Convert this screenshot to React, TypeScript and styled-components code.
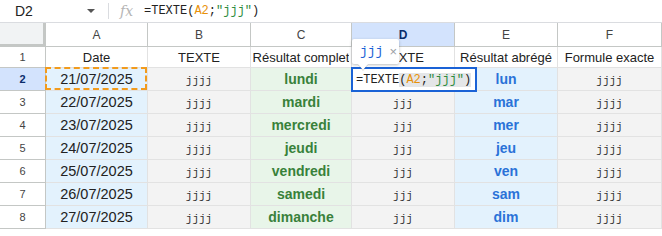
import styled, { createGlobalStyle } from 'styled-components';

const GlobalStyle = createGlobalStyle`
  body {
    margin: 0;
    background: #ffffff;
    font-family: 'Liberation Sans', Arial, sans-serif;
    color: #222;
  }
`;

const Page = styled.div`
  width: 662px;
  height: 236px;
  overflow: hidden;
  background: #fff;
`;

const FormulaBar = styled.div`
  display: flex;
  align-items: center;
  height: 23px;
  border-bottom: 1px solid #dadce0;
  box-sizing: border-box;
`;

const NameBox = styled.div`
  width: 82px;
  padding-left: 15px;
  font-size: 14px;
  color: #222;
  box-sizing: border-box;
`;

const Caret = styled.span`
  width: 0;
  height: 0;
  border-left: 4px solid transparent;
  border-right: 4px solid transparent;
  border-top: 4px solid #555;
  margin-left: 5px;
`;

const Divider = styled.span`
  width: 1px;
  height: 16px;
  background: #dadce0;
  margin: 0 11px 0 13px;
`;

const Fx = styled.span`
  font-family: 'DejaVu Serif', serif;
  font-style: italic;
  font-size: 14px;
  color: #b5b5b5;
  width: 24px;
`;

const FormulaText = styled.span`
  font-family: 'Liberation Mono', 'DejaVu Sans Mono', monospace;
  font-size: 12px;
  color: #222;
  white-space: pre;
`;

const Ref = styled.span`
  color: #e8910a;
`;

const Str = styled.span`
  color: #2e8b3e;
`;

const Paren = styled.span<{ $hl?: boolean }>`
  background: ${(p) => (p.$hl ? '#e4e6e8' : 'transparent')};
`;

const Grid = styled.div`
  display: grid;
  grid-template-columns: 46px 102px 103px 101px 103px 103px 104px;
  grid-template-rows: 24px 21px repeat(7, 23px);
`;

const Corner = styled.div`
  background: #f1f3f4;
  border-right: 3px solid #c4c7c5;
  border-bottom: 3px solid #c4c7c5;
  box-sizing: border-box;
`;

const ColHead = styled.div<{ $active?: boolean }>`
  display: flex;
  align-items: center;
  justify-content: center;
  font-size: 12px;
  color: ${(p) => (p.$active ? '#0b2d6b' : '#444')};
  font-weight: ${(p) => (p.$active ? 'bold' : 'normal')};
  background: ${(p) => (p.$active ? '#d3e3fd' : '#fff')};
  border-right: 1px solid #c4c7c5;
  border-bottom: 1px solid #c4c7c5;
  box-sizing: border-box;
`;

const RowHead = styled.div<{ $active?: boolean }>`
  display: flex;
  align-items: center;
  justify-content: center;
  font-size: 11px;
  color: ${(p) => (p.$active ? '#0b2d6b' : '#444')};
  font-weight: ${(p) => (p.$active ? 'bold' : 'normal')};
  background: ${(p) => (p.$active ? '#d3e3fd' : '#fff')};
  border-right: 1px solid #c4c7c5;
  border-bottom: 1px solid #c4c7c5;
  box-sizing: border-box;
`;

type Kind = 'head' | 'date' | 'mono' | 'green' | 'blue';

const bg: Record<Kind, string> = {
  head: '#ffffff',
  date: '#e3f2fd',
  mono: '#f3f3f3',
  green: '#e8f5e9',
  blue: '#e3f2fd',
};

const Cell = styled.div<{ $kind: Kind }>`
  position: relative;
  display: flex;
  align-items: ${(p) => (p.$kind === 'mono' ? 'flex-end' : 'center')};
  justify-content: center;
  padding-bottom: ${(p) => (p.$kind === 'mono' ? '3px' : '0')};
  background: ${(p) => bg[p.$kind]};
  border-right: 1px solid #e2e2e2;
  border-bottom: 1px solid #e2e2e2;
  box-sizing: border-box;
  white-space: nowrap;
  font-size: ${(p) =>
    p.$kind === 'head' ? '13px' : p.$kind === 'date' ? '14.5px' : p.$kind === 'mono' ? '11px' : '14px'};
  font-family: ${(p) =>
    p.$kind === 'mono' ? "'Liberation Mono', 'DejaVu Sans Mono', monospace" : "'Liberation Sans', Arial, sans-serif"};
  font-weight: ${(p) => (p.$kind === 'green' || p.$kind === 'blue' ? 'bold' : 'normal')};
  color: ${(p) =>
    p.$kind === 'green' ? '#38813a' : p.$kind === 'blue' ? '#2a72d8' : p.$kind === 'mono' ? '#333' : '#222'};
`;

const CellText = styled.span`
  overflow: hidden;
`;

const RefOutline = styled.div`
  position: absolute;
  inset: -1px 0 0 -1px;
  border: 2px dashed #f29b1d;
  pointer-events: none;
`;

const Editor = styled.div`
  position: absolute;
  left: -1px;
  top: -1px;
  width: 126px;
  height: 25px;
  display: flex;
  align-items: center;
  padding-left: 3px;
  background: #fff;
  border: 2px solid #1a62d6;
  box-sizing: border-box;
  z-index: 3;
  font-family: 'Liberation Mono', 'DejaVu Sans Mono', monospace;
  font-size: 12px;
  font-weight: normal;
  color: #222;
  white-space: pre;
`;

const Tip = styled.div`
  position: absolute;
  left: 0;
  top: -29px;
  width: 47px;
  height: 25px;
  display: flex;
  align-items: center;
  gap: 6px;
  padding-left: 8px;
  background: #fff;
  box-sizing: border-box;
  box-shadow: 0 1px 3px rgba(60, 64, 67, 0.35);
  border-radius: 2px;
  z-index: 4;

  &::after {
    content: '';
    position: absolute;
    left: 6px;
    bottom: -6px;
    border-left: 5px solid transparent;
    border-right: 5px solid transparent;
    border-top: 6px solid #fff;
    filter: drop-shadow(0 1px 0 rgba(60, 64, 67, 0.2));
  }
`;

const TipText = styled.span`
  font-family: 'Liberation Mono', 'DejaVu Sans Mono', monospace;
  font-size: 13px;
  color: #1a62d6;
`;

const TipClose = styled.span`
  font-family: 'Liberation Sans', Arial, sans-serif;
  font-size: 13px;
  color: #9aa0a6;
`;

const cols = ['A', 'B', 'C', 'D', 'E', 'F'];
const full = ['lundi', 'mardi', 'mercredi', 'jeudi', 'vendredi', 'samedi', 'dimanche'];
const short = ['lun', 'mar', 'mer', 'jeu', 'ven', 'sam', 'dim'];

function Formula() {
  return (
    <>
      =TEXTE<Paren $hl>(</Paren>
      <Paren $hl>
        <Ref>A2</Ref>;<Str>"jjj"</Str>
      </Paren>
      <Paren $hl>)</Paren>
    </>
  );
}

export default function App() {
  return (
    <Page>
      <GlobalStyle />
      <FormulaBar>
        <NameBox>D2</NameBox>
        <Caret />
        <Divider />
        <Fx>fx</Fx>
        <FormulaText>
          =TEXTE(<Ref>A2</Ref>;<Str>"jjj"</Str>)
        </FormulaText>
      </FormulaBar>
      <Grid>
        <Corner />
        {cols.map((c) => (
          <ColHead key={c} $active={c === 'D'}>
            {c}
          </ColHead>
        ))}

        <RowHead>1</RowHead>
        <Cell $kind="head">Date</Cell>
        <Cell $kind="head">TEXTE</Cell>
        <Cell $kind="head">
          <CellText>Résultat complet</CellText>
        </Cell>
        <Cell $kind="head">TEXTE</Cell>
        <Cell $kind="head">Résultat abrégé</Cell>
        <Cell $kind="head">Formule exacte</Cell>

        {full.map((day, i) => {
          const row = i + 2;
          return (
            <>
              <RowHead key={`h${row}`} $active={row === 2}>
                {row}
              </RowHead>
              <Cell key={`a${row}`} $kind="date">
                {`${21 + i}/07/2025`}
                {row === 2 && <RefOutline />}
              </Cell>
              <Cell key={`b${row}`} $kind="mono">
                jjjj
              </Cell>
              <Cell key={`c${row}`} $kind="green">
                {day}
              </Cell>
              <Cell key={`d${row}`} $kind="mono">
                {row === 2 ? (
                  <>
                    <Tip>
                      <TipText>jjj</TipText>
                      <TipClose>×</TipClose>
                    </Tip>
                    <Editor>
                      <Formula />
                    </Editor>
                  </>
                ) : (
                  'jjj'
                )}
              </Cell>
              <Cell key={`e${row}`} $kind="blue">
                {short[i]}
              </Cell>
              <Cell key={`f${row}`} $kind="mono">
                jjjj
              </Cell>
            </>
          );
        })}
      </Grid>
    </Page>
  );
}
